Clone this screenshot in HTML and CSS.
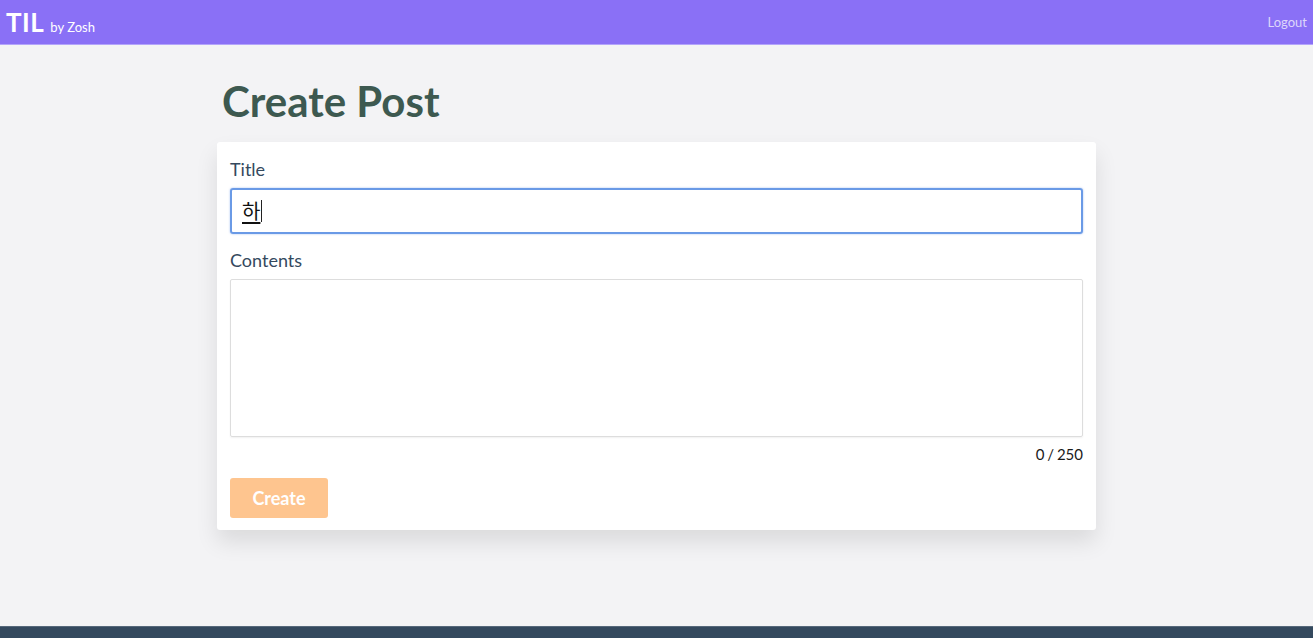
FILE: index.html
```html
<!DOCTYPE html>
<html lang="ko">
<head>
<meta charset="utf-8">
<title>TIL by Zosh - Create Post</title>
<link rel="stylesheet" href="styles.css">
</head>
<body>
<header class="navbar">
  <div class="brand"><span class="brand-name">TIL</span><span class="brand-by">by Zosh</span></div>
  <a class="logout" href="#">Logout</a>
</header>
<main class="main">
  <div class="container">
    <h1 class="page-title">Create Post</h1>
    <form class="card">
      <label class="label">Title</label>
      <div class="field field-focus"><span class="composing">하</span></div>
      <label class="label label-contents">Contents</label>
      <div class="textarea"></div>
      <div class="counter">0 / 250</div>
      <button type="button" class="btn">Create</button>
    </form>
  </div>
</main>
<footer class="footer"></footer>
</body>
</html>
```
FILE: styles.css
```css
* { box-sizing: border-box; }
html, body { margin: 0; padding: 0; }
body {
  font-family: Lato, "Noto Sans CJK KR", sans-serif;
  background: #f3f3f5;
  min-height: 100vh;
  display: flex;
  flex-direction: column;
}
.navbar {
  height: 45px;
  background: #8a70f6;
  border-bottom: 1px solid #b3a4fa;
  display: flex;
  align-items: center;
  justify-content: space-between;
  padding: 0 6px;
}
.brand { display: flex; align-items: baseline; gap: 6px; color: #fff; }
.brand-name { font-size: 26px; font-weight: 700; letter-spacing: 0.5px; }
.brand-by { font-size: 13px; }
.logout { color: #ddd6fb; font-size: 13px; text-decoration: none; }
.main { flex: 1; }
.container { width: 879px; margin: 0 auto; }
.page-title {
  margin: 31px 0 16px 5px;
  font-size: 42px;
  line-height: 50px;
  font-weight: 700;
  color: #3d5950;
}
.card {
  background: #fff;
  border-radius: 3px;
  padding: 14px 13px 12px;
  box-shadow: 0 12px 22px rgba(0,0,0,0.1);
  display: flex;
  flex-direction: column;
}
.label {
  font-size: 18px;
  color: #34495e;
  line-height: 26px;
  margin-bottom: 6px;
}
.label-contents { margin-top: 13px; margin-bottom: 6px; }
.field {
  height: 46px;
  border: 2px solid #6a9ae6;
  border-radius: 3px;
  padding: 0 10px;
  display: flex;
  align-items: center;
  font-size: 20px;
  color: #111;
  box-shadow: 0 0 2px rgba(90,140,230,0.6);
}
.composing {
  font-family: "Noto Sans CJK KR", sans-serif;
  text-decoration: underline;
  text-underline-offset: 3px;
  border-right: 1px solid #222;
  line-height: 22px;
  padding-right: 1px;
}
.textarea {
  height: 158px;
  border: 1px solid #ddd;
  border-radius: 2px;
  box-shadow: 0 1px 2px rgba(0,0,0,0.06);
}
.counter {
  text-align: right;
  font-size: 15px;
  color: #1a1a1a;
  margin-top: 8px;
  line-height: 18px;
  word-spacing: -1px;
}
.btn {
  margin-top: 15px;
  width: 98px;
  height: 40px;
  border: none;
  border-radius: 3px;
  background: #fec58f;
  color: #fff;
  font-family: Lato, sans-serif;
  font-size: 18px;
  font-weight: 700;
}
.footer { height: 12px; background: #34495e; border-top: 1px solid #56687a; }
```
